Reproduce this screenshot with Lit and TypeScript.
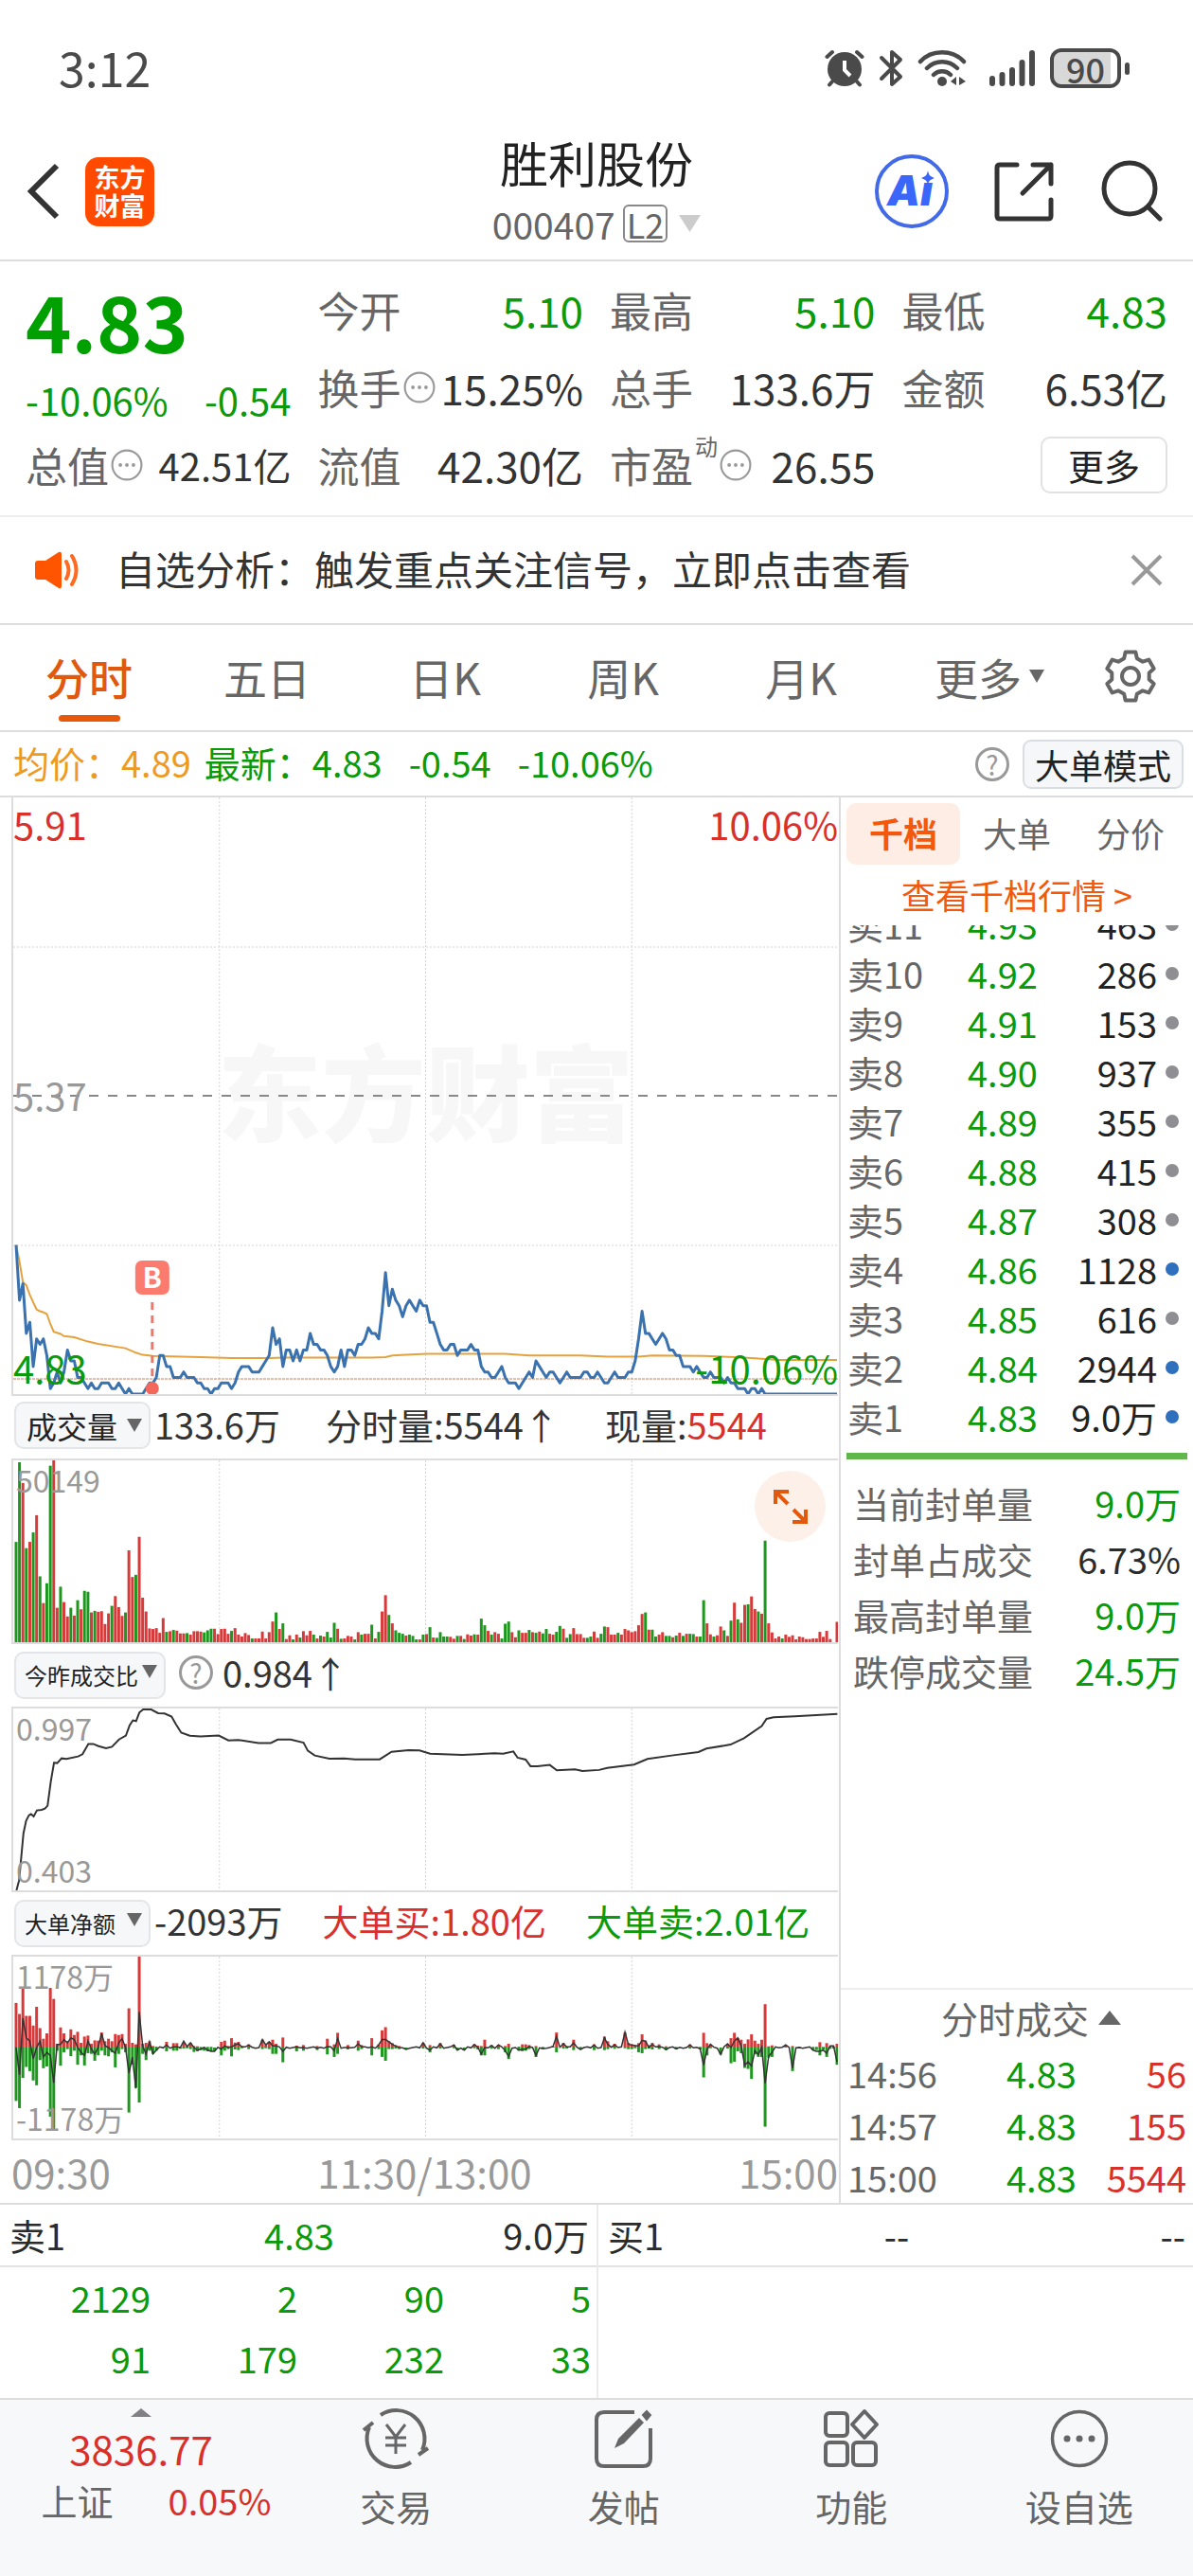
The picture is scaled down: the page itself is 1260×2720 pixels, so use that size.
import { LitElement, html, svg, css } from "lit";
import { customElement, state } from "lit/decorators.js";
import { classMap } from "lit/directives/class-map.js";

type Level = [string, string, string, boolean];

const LEVELS: Level[] = [
  ["卖11", "4.93", "463", false],
  ["卖10", "4.92", "286", false],
  ["卖9", "4.91", "153", false],
  ["卖8", "4.90", "937", false],
  ["卖7", "4.89", "355", false],
  ["卖6", "4.88", "415", false],
  ["卖5", "4.87", "308", false],
  ["卖4", "4.86", "1128", true],
  ["卖3", "4.85", "616", false],
  ["卖2", "4.84", "2944", true],
  ["卖1", "4.83", "9.0万", true],
];

const SEAL: [string, string, string][] = [
  ["当前封单量", "9.0万", "green"],
  ["封单占成交", "6.73%", "dark"],
  ["最高封单量", "9.0万", "green"],
  ["跌停成交量", "24.5万", "green"],
];

const TRADES = [
  ["14:56", "4.83", "56"],
  ["14:57", "4.83", "155"],
  ["15:00", "4.83", "5544"],
];

const QUEUE = [
  ["2129", "2", "90", "5"],
  ["91", "179", "232", "33"],
];

/* Last price per minute, in cents above 4.83. */
const PRICE = (
  "27 17 20 11 13 5 10 9 10 7 1 2 4 2 4 8 6 6 3 3 2 1 2 1 1 2 2 2 1 1 2 1 0 1 0 0 0 0 1 2 2 3 7 7 5 5 3 3 3 4 3 3 3 2 2 1 1 0 1 1 " +
  "2 2 2 1 2 4 5 5 5 4 4 4 5 6 7 12 9 10 5 8 8 6 8 6 8 8 11 9 9 8 8 7 5 4 5 8 5 8 8 7 9 9 10 12 11 11 10 15 22 16 19 17 16 14 16 17 16 15 17 16 " +
  "16 13 13 11 9 8 8 9 9 7 8 8 8 9 8 8 5 4 4 3 3 4 5 3 2 2 2 1 2 3 4 3 6 5 4 3 4 4 3 2 3 4 3 3 3 3 4 4 3 3 4 3 2 2 3 4 3 3 3 4 " +
  "4 6 10 15 11 11 10 9 10 11 10 8 8 7 7 5 5 5 4 5 4 3 3 4 3 3 3 2 3 2 2 1 1 1 0 1 1 0 1 0 0 0 0 0 0 0 0 0 0 0 0 0 0 0 0 0 0 0 0 0 0"
).split(" ").map(Number);

/* Average price: minute, cents above 4.83. */
const AVERAGE: [number, number][] = [
  [0, 27], [1, 24], [2, 20.3], [3, 19.7], [4, 18], [5, 16.6], [6, 15.3], [7, 15], [8, 14.8], [9, 14.5], [10, 12.7],
  [11, 11.3], [13, 10.9], [14, 10.5], [17, 10.3], [21, 9.5], [24, 9.1], [32, 8.3], [35, 7.5], [37, 7.1], [40, 6.9],
  [54, 6.7], [63, 6.5], [74, 6.5], [78, 6.6], [104, 6.6], [108, 6.7], [110, 7], [114, 7.1], [120, 7.3], [143, 7.3],
  [150, 7], [165, 7], [173, 6.8], [182, 6.8], [186, 7], [201, 6.9], [210, 6.7], [215, 6.5], [223, 6.2], [240, 6.2],
];

/* Volume per minute; 580 is the top of the scale, the letter is the colour. */
const VOLUME = (
  "320g 574g 508r 300g 320r 350g 405r 210g 125r 188g 563g 580r 110r 177g 128r 82r 110g 85r 134g 105r 164g 161g 95r 100g 97r 99r 58r 92r 116g 147r " +
  "112r 84r 95g 293r 208r 215g 336r 142r 98r 44r 42r 45r 30r 77r 33g 35r 39g 37r 28r 28r 29g 24r 35r 35r 34r 31g 38g 43g 43r 26r " +
  "42r 43r 27r 36g 45r 24r 18r 29r 23r 12g 12r 12r 34r 12r 32r 66r 95g 42r 60g 10r 22r 9g 24r 15g 35r 22r 36r 24g 12r 21g " +
  "18r 33g 15g 62g 43r 11g 12r 20r 18r 9g 32r 24g 27r 27r 56g 12r 33g 98r 150r 87g 60r 38g 30g 27g 21r 24g 20g 9g 9r 24g " +
  "26r 48g 15r 14g 32g 18g 18g 17r 11r 20g 20r 10g 25r 21r 25g 24r 75g 54g 36r 24g 32r 27r 12g 59g 66g 32r 16r 38g 30r 30r " +
  "39g 32r 30g 34r 28g 42g 27r 24r 33g 52g 43r 14g 26g 45r 26r 26r 14r 14g 18g 34r 14r 27g 50g 48r 24r 24r 30g 24r 42r 38r " +
  "32r 35r 54r 90r 95g 40r 40g 18g 24r 32r 20g 20g 16r 21g 30r 20g 27r 27g 26g 18r 18g 134g 60r 25r 18g 22r 50r 38g 20r 69g " +
  "126r 73g 62r 119r 121g 146r 106r 98g 91r 324g 60r 31r 12r 18r 12g 24r 17r 22r 9r 18r 16r 10r 10r 12r 12r 33r 17r 36r 10r 0r 65r"
).split(" ");

/* Turnover ratio curve on a 1537 × 580 grid with its origin at 22,187. */
const RATIO: [number, number][] = [
  [29, 767], [34, 735], [38, 660], [42, 585], [47, 545], [52, 528], [56, 524], [61, 531], [67, 512], [76, 510], [82, 506],
  [87, 497], [93, 420], [99, 360], [105, 361], [113, 346], [122, 348], [144, 340], [152, 333], [163, 300], [172, 300],
  [182, 307], [196, 314], [207, 309], [220, 286], [233, 273], [240, 240], [246, 225], [252, 227], [258, 200], [265, 190],
  [280, 190], [293, 202], [305, 203], [318, 213], [326, 237], [336, 264], [352, 274], [372, 276], [406, 273], [424, 289],
  [442, 287], [480, 297], [503, 297], [516, 286], [540, 286], [564, 296], [572, 322], [585, 337], [612, 347], [640, 346],
  [660, 349], [706, 349], [728, 325], [760, 320], [780, 321], [800, 331], [860, 335], [920, 330], [936, 331], [955, 324],
  [963, 344], [978, 350], [987, 371], [1000, 371], [1023, 367], [1036, 384], [1070, 381], [1084, 386], [1115, 383],
  [1130, 377], [1180, 366], [1205, 348], [1250, 337], [1300, 326], [1315, 315], [1360, 302], [1385, 282], [1418, 243],
  [1427, 220], [1440, 215], [1480, 212], [1559, 204],
];

/* Large orders: minute:bought/sold/net, 290 is the top of the scale. */
const ORDERS = (
  "0:142/170/0 1:107/193/-85 2:190/97/92 3:101/62/30 4:101/75/20 5:70/105/-35 6:130/120/0 7:62/40/20 8:28/66/-30 9:45/60/-15 " +
  "10:190/220/-25 11:155/265/-110 12:12/10/10 13:64/58/10 14:45/15/25 15:20/5/15 16:58/27/30 17:40/10/25 18:50/55/0 19:15/25/-15 " +
  "20:35/57/-25 21:38/18/20 22:12/20/-5 23:23/42/-20 24:22/25/0 25:48/10/45 26:20/25/5 27:28/28/0 28:20/15/-10 29:43/63/-18 " +
  "30:40/20/15 31:43/5/28 32:12/15/0 33:125/207/-80 34:15/55/-30 35:10/128/-128 36:290/175/112 37:12/20/5 38:15/40/-20 39:20/10/18 " +
  "40:5/20/-20 41:3/10/-8 44:18/12/8 46:14/10/2 47:14/10/2 48:2/4/0 49:15/3/20 50:4/2/3 51:14/5/15 52:5/14/0 53:4/12/-8 54:2/8/-5 55:2/10/0 " +
  "56:2/12/-8 57:2/12/-12 58:0/12/-12 60:18/25/-5 61:22/10/5 62:5/5/0 63:30/28/2 64:16/6/8 65:18/8/12 66:5/2/2 68:10/5/8 72:25/5/25 " +
  "73:8/2/8 74:18/5/18 75:25/20/5 76:12/20/5 78:32/47/-12 82:6/12/2 84:8/10/0 88:5/8/-2 91:28/22/3 93:10/30/-10 94:47/20/28 " +
  "97:8/6/0 100:22/10/12 101:8/5/2 104:30/25/2 106:10/5/8 107:55/30/25 108:65/42/25 109:20/5/18 110:14/5/10 111:8/3/4 112:5/5/0 " +
  "114:0/5/-6 119:15/3/15 121:8/15/-8 124:14/3/12 128:8/2/8 129:0/8/-8 131:0/8/-8 134:10/2/10 135:6/6/0 136:5/25/-20 137:25/25/0 139:8/4/6 " +
  "141:8/5/8 143:5/15/-10 144:12/37/-28 147:3/10/-8 148:10/12/-5 149:10/10/-5 150:8/5/3 152:5/30/-25 154:2/4/-4 157:4/0/4 " +
  "158:48/15/35 160:15/3/12 161:3/3/2 163:25/8/15 165:2/5/-6 169:10/8/8 172:35/8/30 173:20/5/10 175:12/4/8 178:48/2/48 179:15/5/10 " +
  "180:10/5/8 181:8/2/6 182:14/15/5 183:42/18/22 184:22/5/20 185:8/3/0 186:15/6/10 188:10/5/3 190:4/8/-6 193:2/6/-4 197:10/3/8 " +
  "200:2/6/-4 201:47/95/-55 202:14/25/-5 203:10/2/10 206:0/22/-22 208:12/3/12 209:30/50/0 210:47/45/20 211:30/12/30 212:25/18/5 " +
  "213:12/65/-55 214:26/68/-45 215:42/100/-58 216:22/22/-10 217:12/30/-22 218:25/30/0 219:138/252/-112 220:4/32/-28 221:7/30/-15 " +
  "225:6/0/8 227:5/75/-65 229:3/3/0 233:2/8/-8 234:2/8/-12 235:17/25/-12 236:2/6/-8 237:14/30/-18 238:4/4/5 239:3/3/5 240:12/55/-45"
).split(" ").map((entry) => {
  const [minute, values] = entry.split(":");
  const [bought, sold, net] = values.split("/").map(Number);
  return { minute: Number(minute), bought, sold, net };
});

const CHART_WIDTH = 872;
const minuteX = (minute: number) => 3 + (minute * 868) / 240;

const toPoints = (points: [number, number][]) =>
  points.map(([x, y]) => `${x.toFixed(1)},${y.toFixed(1)}`).join(" ");

const gearPath = () => {
  const points: string[] = [];
  for (let tooth = 0; tooth < 6; tooth++) {
    const middle = tooth * 60 - 90;
    for (const [offset, radius] of [[-20, 20], [-12, 26], [12, 26], [20, 20]]) {
      const angle = ((middle + offset) * Math.PI) / 180;
      points.push(`${(30 + radius * Math.cos(angle)).toFixed(1)} ${(30 + radius * Math.sin(angle)).toFixed(1)}`);
    }
  }
  return `M${points.join("L")}Z`;
};

const gridLines = (height: number) => svg`
  ${[1, 2, 3].map((n) => svg`<line class="dots" x1=${(n * CHART_WIDTH) / 4} x2=${(n * CHART_WIDTH) / 4} y1="0" y2=${height} />`)}
`;

const moreInfo = html`<svg class="info" viewBox="0 0 32 32" aria-hidden="true">
  <circle cx="16" cy="16" r="14.5" fill="none" stroke="#999" stroke-width="2" />
  <circle cx="9.5" cy="16" r="1.8" fill="#999" /><circle cx="16" cy="16" r="1.8" fill="#999" /><circle cx="22.5" cy="16" r="1.8" fill="#999" />
</svg>`;

const helpMark = html`<button class="help" aria-label="说明">?</button>`;

@customElement("app-root")
export class AppRoot extends LitElement {
  @state() private period = "分时";
  @state() private depth = "千档";
  @state() private notice = true;

  static styles = css`
    :host {
      display: block;
      background: #fff;
      color: #333;
      font-family: "Noto Sans CJK SC", "Noto Sans", sans-serif;
      font-size: 38px;
      line-height: 48px;
    }
    * { box-sizing: border-box; }
    button, select {
      font: inherit;
      color: inherit;
      background: none;
      border: 0;
      padding: 0;
      margin: 0;
    }
    a { color: inherit; text-decoration: none; }
    svg { display: block; flex: none; }
    h1, p { margin: 0; }
    table { border-collapse: collapse; width: 100%; }
    td, th { padding: 0; font-weight: 400; text-align: left; }
    .green { color: #0a9a0a; }
    .red { color: #d9302c; }
    .orange { color: #ee9a22; }
    .dark { color: #2b2b2b; }

    .status {
      display: flex;
      align-items: center;
      justify-content: space-between;
      height: 130px;
      padding: 10px 76px 0 62px;
      color: #4a4a4a;
      font-size: 50px;
    }
    .status-icons { display: flex; align-items: center; gap: 15px; padding-top: 4px; }
    .signal { margin-left: 8px; }
    .battery {
      position: relative;
      display: grid;
      place-items: center;
      width: 75px;
      height: 42px;
      border: 4px solid #4a4a4a;
      border-radius: 12px;
      background: linear-gradient(90deg, #d8d8d8 90%, #fff 90%);
      font-size: 36px;
      font-weight: 500;
      line-height: 34px;
    }
    .battery::after {
      content: "";
      position: absolute;
      right: -13px;
      top: 11px;
      width: 5px;
      height: 13px;
      border-radius: 3px;
      background: #4a4a4a;
    }

    .head {
      display: grid;
      grid-template-columns: 1fr auto 1fr;
      align-items: center;
      height: 146px;
      border-bottom: 2px solid #ddd;
    }
    .head-left { display: flex; align-items: center; gap: 26px; padding-left: 26px; }
    .head-right { display: flex; align-items: center; justify-content: flex-end; gap: 48px; padding-right: 32px; }
    .logo {
      display: grid;
      place-content: center;
      width: 73px;
      height: 73px;
      border-radius: 14px;
      background: #ff4a00;
      color: #fff;
      font-size: 27px;
      font-weight: 700;
      line-height: 30px;
    }
    .title { display: grid; justify-items: center; row-gap: 12px; padding-bottom: 8px; }
    .title h1 { font-size: 51px; font-weight: 400; line-height: 64px; color: #222; }
    .code { display: flex; align-items: center; gap: 8px; color: #666; font-size: 39px; line-height: 42px; }
    .level { border: 2px solid #888; border-radius: 6px; padding: 0 2px; font-size: 36px; line-height: 36px; }
    .code svg { margin-left: 4px; }

    .quote {
      display: grid;
      grid-template-columns: repeat(4, minmax(0, 1fr));
      column-gap: 28px;
      padding: 11px 27px;
      border-bottom: 2px solid #eee;
      font-size: 44px;
    }
    .cell { display: flex; align-items: center; justify-content: space-between; height: 82px; padding-bottom: 2px; white-space: nowrap; }
    .cell .label { display: flex; align-items: center; color: #666; }
    .cell .small { font-size: 40px; }
    .dynamic { align-self: flex-start; font-size: 24px; line-height: 24px; margin-left: 2px; margin-top: -8px; }
    .price { height: 108px; font-size: 82px; font-weight: 700; line-height: 102px; color: #00a000; }
    .change { display: flex; align-items: center; justify-content: space-between; height: 56px; padding-bottom: 2px; font-size: 40px; }
    .info { width: 34px; height: 34px; margin-left: 2px; }
    .more {
      margin-left: auto;
      width: 134px;
      height: 60px;
      border: 2px solid #e2e2e2;
      border-radius: 10px;
      color: #222;
      font-size: 38px;
      line-height: 50px;
    }

    .notice {
      display: flex;
      align-items: center;
      height: 114px;
      padding: 0 32px 0 36px;
      border-bottom: 2px solid #ddd;
      font-size: 42px;
    }
    .notice p { flex: 1; padding: 0 0 4px 36px; }
    .notice button { display: grid; }

    .periods {
      display: grid;
      grid-template-columns: repeat(5, 188fr) 210fr 88fr;
      padding-right: 22px;
      height: 113px;
      border-bottom: 2px solid #ddd;
      color: #666;
      font-size: 46px;
    }
    .periods button {
      position: relative;
      display: flex;
      align-items: center;
      justify-content: center;
      gap: 8px;
      padding-bottom: 4px;
    }
    .periods .on { color: #e0590f; font-weight: 500; }
    .periods .on::after {
      content: "";
      position: absolute;
      left: calc(50% - 32px);
      bottom: 9px;
      width: 65px;
      height: 7px;
      border-radius: 4px;
      background: #e8580a;
    }

    .summary {
      display: flex;
      align-items: center;
      gap: 14px;
      height: 67px;
      padding: 0 10px 0 14px;
    }
    .summary > span { padding-bottom: 4px; }
    .summary .latest { display: flex; gap: 28px; margin-right: auto; }
    .help {
      width: 36px;
      height: 36px;
      border: 3px solid #999;
      border-radius: 50%;
      color: #999;
      font-size: 28px;
      line-height: 28px;
    }
    .mode {
      width: 170px;
      height: 52px;
      border: 2px solid #dadde2;
      border-radius: 9px;
      background: #f6f7f9;
      color: #222;
      font-size: 36px;
      line-height: 44px;
    }

    .body { display: grid; grid-template-columns: minmax(0, 1fr) 374px; border-top: 2px solid #ddd; }
    .charts { padding: 0 1px 0 12px; }
    .chart { position: relative; border: solid #ddd; border-width: 2px 0 2px 2px; }
    .chart.first { border-top: 0; }
    .chart svg.plot { width: 100%; height: 192px; }
    .chart svg.tall { height: 630px; }
    .plot * { vector-effect: non-scaling-stroke; }
    .dots { stroke: #d4d4d4; stroke-width: 1; stroke-dasharray: 2 2; }
    .tag { position: absolute; left: 3px; color: #999; font-size: 32px; line-height: 40px; }
    .tag.big { left: 0; font-size: 40px; }
    .tag.right { left: auto; right: 0; }
    .tag.top { top: 0; }
    .tag.upper { top: 8px; }
    .tag.mid { top: 294px; }
    .tag.bottom { bottom: 2px; }
    .tag.big.bottom { bottom: 8px; }
    .tag.red { color: #d9302c; }
    .tag.green { color: #0a9a0a; }
    .watermark {
      position: absolute;
      inset: 0;
      display: grid;
      place-items: center;
      padding-bottom: 16px;
      color: #f7f7f7;
      font-size: 110px;
      font-weight: 900;
      line-height: 120px;
    }
    .layer { position: relative; }
    .bar { display: flex; align-items: center; height: 66px; padding: 0 0 6px 3px; white-space: nowrap; }
    .bar .gap { margin-left: 48px; }
    .bar .narrow { margin-left: 42px; }
    .bar .value { margin-left: 4px; }
    .bar .help { margin: 0 6px 0 14px; }
    .picker { position: relative; display: block; }
    .picker select {
      appearance: none;
      width: 144px;
      height: 50px;
      padding: 0 0 0 11px;
      border: 2px solid #e3e5e9;
      border-radius: 10px;
      background: #f6f7f9;
      color: #222;
      font-size: 32px;
      line-height: 44px;
    }
    .picker.long select { width: 160px; }
    .picker.compact select { padding-left: 9px; font-size: 24px; }
    .picker svg { position: absolute; right: 9px; top: 19px; pointer-events: none; }
    .expand {
      position: absolute;
      right: 13px;
      top: 11px;
      display: grid;
      place-items: center;
      width: 75px;
      height: 75px;
      border-radius: 50%;
      background: #fdf0e8;
    }
    .times { display: grid; grid-template-columns: 1fr auto 1fr; height: 66px; align-items: center; color: #999; font-size: 42px; }
    .times span:last-child { text-align: right; }

    .side { display: flex; flex-direction: column; border-left: 2px solid #ddd; }
    .depths { display: grid; grid-template-columns: repeat(3, 1fr); padding: 6px 6px 0; color: #666; font-size: 36px; }
    .depths button { height: 65px; border-radius: 10px; line-height: 56px; padding-bottom: 4px; }
    .depths .on { background: #feede4; color: #f2590d; font-weight: 700; }
    .full { display: block; height: 64px; text-align: center; color: #f2590d; font-size: 36px; line-height: 62px; }
    .ladder { display: flex; flex-direction: column; justify-content: flex-end; height: 545px; overflow: hidden; padding: 0 14px 0 7px; }
    .ladder table { table-layout: fixed; flex: none; }
    .ladder tr { height: 52px; }
    .ladder th { width: 127px; color: #666; }
    .ladder .amount { text-align: right; color: #222; white-space: nowrap; }
    .ladder .mark { width: 24px; }
    .dot { width: 14px; height: 14px; margin-left: 9px; border-radius: 50%; background: #8e8e93; }
    .dot.blue { background: #2e70bd; }
    .depth-bar { height: 7px; margin: 12px 6px 16px; background: #62b74c; }
    .seal { display: flex; justify-content: space-between; align-items: center; height: 59px; padding: 0 13px; color: #666; }
    .trades { margin-top: auto; border-top: 2px solid #eee; padding: 0 7px; }
    .trades-title { display: flex; align-items: center; justify-content: center; gap: 10px; width: 100%; height: 60px; color: #666; font-size: 39px; padding: 0 0 2px 30px; }
    .trades tr { height: 55px; }
    .trades th { width: 168px; color: #666; }
    .trades td:last-child { text-align: right; }

    .best { display: grid; grid-template-columns: 1fr 1fr; border-top: 2px solid #ddd; border-bottom: 2px solid #ddd; }
    .half + .half { border-left: 2px solid #eaeaea; }
    .best-row { display: grid; grid-template-columns: 1fr 1fr 1fr; height: 66px; align-items: center; padding: 0 8px 0 10px; border-bottom: 2px solid #e2e2e2; color: #2b2b2b; }
    .best-row :nth-child(2) { text-align: center; }
    .best-row :nth-child(3) { text-align: right; }
    .queue { padding: 0 6px 10px 4px; }
    .queue table { table-layout: fixed; }
    .queue tr { height: 64px; }
    .queue td { text-align: right; }

    .nav { display: grid; grid-template-columns: 298px repeat(4, 1fr); height: 186px; background: #f7f8fa; color: #666; }
    .nav a, .nav button { display: grid; justify-items: center; align-content: start; }
    .nav button { padding-top: 8px; row-gap: 14px; }
    .index { padding-top: 9px; }
    .index .points { font-size: 42px; line-height: 50px; margin-top: 8px; }
    .index .line { display: flex; gap: 58px; line-height: 52px; margin-top: 4px; padding-left: 32px; }
  `;

  private picker(label: string, cls: string) {
    return html`<label class="picker ${cls}">
      <select aria-label="指标"><option>${label}</option></select>
      <svg width="16" height="14" viewBox="0 0 16 14"><path d="M0 0H16L8 14Z" fill="#666" /></svg>
    </label>`;
  }

  private priceChart() {
    const y = (cents: number) => 630 - cents * 5.83;
    return html`<div class="chart first">
      <div class="watermark" aria-hidden="true">东方财富</div>
      <div class="layer">
        <svg class="plot tall" viewBox="0 0 872 630" preserveAspectRatio="none" role="img" aria-label="分时走势">
          ${gridLines(630)}
          <line class="dots" x1="0" x2="872" y1="158" y2="158" />
          <line class="dots" x1="0" x2="872" y1="473" y2="473" />
          <line x1="0" x2="872" y1="315" y2="315" stroke="#888" stroke-width="2" stroke-dasharray="10 10" />
          <line x1="0" x2="872" y1="614" y2="614" stroke="#c08060" stroke-width="1" stroke-dasharray="3 1" />
          <polyline fill="none" stroke="#e5a23c" stroke-width="2" points=${toPoints(AVERAGE.map(([m, c]) => [minuteX(m), y(c)]))} />
          <polyline fill="none" stroke="#3a72b0" stroke-width="3" stroke-linejoin="round" points=${toPoints(PRICE.map((c, m) => [minuteX(m), y(c)]))} />
          <rect x="129" y="489" width="36" height="36" rx="7" fill="#fb7c6e" />
          <line x1="147" x2="147" y1="533" y2="620" stroke="#f0766a" stroke-width="3" stroke-dasharray="8 6" />
          <circle cx="147" cy="624" r="7" fill="#f4685c" />
          <text x="147" y="518" text-anchor="middle" font-size="30" font-weight="700" fill="#fff">B</text>
        </svg>
      </div>
      <span class="tag big top red upper">5.91</span>
      <span class="tag big top right red upper">10.06%</span>
      <span class="tag big mid">5.37</span>
      <span class="tag big bottom green">4.83</span>
      <span class="tag big bottom right green">-10.06%</span>
    </div>`;
  }

  private volumeChart() {
    return html`<div class="chart">
      <svg class="plot" viewBox="0 0 872 190" preserveAspectRatio="none" role="img" aria-label="成交量">
        ${gridLines(190)}
        ${VOLUME.map((bar, minute) => {
          const height = (parseInt(bar, 10) * 190) / 580;
          return svg`<rect x=${(minuteX(minute) - 1.5).toFixed(1)} y=${(190 - height).toFixed(1)} width="3" height=${height.toFixed(1)} fill=${bar.endsWith("g") ? "#1f961f" : "#d63a3a"} />`;
        })}
      </svg>
      <span class="tag top">50149</span>
      <button class="expand" aria-label="全屏">
        <svg width="40" height="40" viewBox="0 0 40 40" fill="none" stroke="#e0590f" stroke-width="4">
          <path d="M4 17V4H18M4 4L17 17M36 23V36H22M36 36L23 23" />
        </svg>
      </button>
    </div>`;
  }

  private ratioChart() {
    const points = RATIO.map(([x, y]): [number, number] => [((x - 23) * 872) / 1537, ((y - 187) * 190) / 580]);
    return html`<div class="chart">
      <svg class="plot" viewBox="0 0 872 190" preserveAspectRatio="none" role="img" aria-label="今昨成交比">
        ${gridLines(190)}
        <polyline fill="none" stroke="#333" stroke-width="2" points=${toPoints(points)} />
      </svg>
      <span class="tag top">0.997</span>
      <span class="tag bottom">0.403</span>
    </div>`;
  }

  private ordersChart() {
    const nets = new Map(ORDERS.map((o) => [o.minute, o.net]));
    const line = Array.from({ length: 241 }, (_, m): [number, number] => [minuteX(m), 95 - (nets.get(m) ?? ((m * 7) % 5) - 2) / 3]);
    return html`<div class="chart">
      <svg class="plot" viewBox="0 0 872 190" preserveAspectRatio="none" role="img" aria-label="大单净额">
        ${gridLines(190)}
        ${ORDERS.map((o) => {
          const x = (minuteX(o.minute) - 1.5).toFixed(1);
          return svg`
            <rect x=${x} y=${(95 - o.bought * 0.328).toFixed(1)} width="3" height=${(o.bought * 0.328).toFixed(1)} fill="#d63a3a" />
            <rect x=${x} y="95" width="3" height=${(o.sold * 0.328).toFixed(1)} fill="#1f961f" />`;
        })}
        <polyline fill="none" stroke="#333" stroke-width="1.5" points=${toPoints(line)} />
      </svg>
      <span class="tag top">1178万</span>
      <span class="tag bottom">-1178万</span>
    </div>`;
  }

  private cell(label: string, value: string, color = "", extra: unknown = "") {
    return html`<div class="cell"><span class="label">${label}${extra}</span><span class=${color}>${value}</span></div>`;
  }

  render() {
    return html`
      <div class="status">
        <span>3:12</span>
        <div class="status-icons">
          <svg width="42" height="40" viewBox="0 0 42 40" fill="none" stroke="#4a4a4a" stroke-width="4" stroke-linecap="round">
            <circle cx="21" cy="21" r="18" fill="#4a4a4a" stroke="none" />
            <path d="M2.5 8L8 3M39.5 8L34 3M9 33L5 37.5M33 33L37 37.5" />
            <path d="M21 12V22L27 28" stroke="#fff" stroke-linecap="butt" />
          </svg>
          <svg width="26" height="40" viewBox="0 0 26 40" fill="none" stroke="#4a4a4a" stroke-width="4" stroke-linejoin="round" stroke-linecap="round">
            <path d="M3 9L23 29L14 37V3L23 11L3 31" />
          </svg>
          <svg width="52" height="40" viewBox="0 0 52 40" fill="none" stroke="#4a4a4a" stroke-width="4.5" stroke-linecap="round">
            <path d="M3 13C15 0 37 0 49 13M10 20C19 11 33 11 42 20M17 27C22 22 30 22 35 27" />
            <circle cx="26" cy="34" r="5" fill="#4a4a4a" stroke="none" />
            <path d="M41 29V38L35 34ZM44 38V29L51 34Z" fill="#4a4a4a" stroke="none" />
          </svg>
          <svg class="signal" width="50" height="40" viewBox="0 0 50 40" stroke="#4a4a4a" stroke-width="6" stroke-linecap="round">
            <path d="M4 31V36M14.5 27V36M25 22V36M35.5 14V36M46 4V36" />
          </svg>
          <span class="battery">90</span>
        </div>
      </div>

      <header class="head">
        <div class="head-left">
          <button aria-label="返回">
            <svg width="38" height="60" viewBox="0 0 38 60" fill="none" stroke="#333" stroke-width="6"><path d="M34 3L7 30L34 57" /></svg>
          </button>
          <a class="logo" href="#" aria-label="首页"><span>东方</span><span>财富</span></a>
        </div>
        <div class="title">
          <h1>胜利股份</h1>
          <div class="code">
            <span>000407</span><span class="level">L2</span>
            <svg width="23" height="18" viewBox="0 0 23 18"><path d="M0 0H23L11.5 18Z" fill="#ccc" /></svg>
          </div>
        </div>
        <div class="head-right">
          <button aria-label="智能助手">
            <svg width="78" height="78" viewBox="0 0 78 78">
              <circle cx="39" cy="39" r="37" fill="none" stroke="#4169e8" stroke-width="4" />
              <text x="37" y="54" text-anchor="middle" font-family="Inter, sans-serif" font-size="44" font-weight="900" font-style="italic" fill="#3a66fa">Aı</text>
              <path d="M56 17C57 22 58 23 63 25C58 27 57 28 56 32C55 28 54 27 49 25C54 23 55 22 56 17Z" fill="#3a66fa" />
            </svg>
          </button>
          <button aria-label="分享">
            <svg width="64" height="64" viewBox="0 0 64 64" fill="none" stroke="#333" stroke-width="5" stroke-linecap="round" stroke-linejoin="round">
              <path d="M24 4H6Q3 4 3 7V58Q3 61 6 61H57Q60 61 60 58V41M41 4H60V24M60 4L30 34" />
            </svg>
          </button>
          <button aria-label="搜索">
            <svg width="66" height="66" viewBox="0 0 66 66" fill="none" stroke="#333" stroke-width="5" stroke-linecap="round">
              <circle cx="31" cy="30" r="27" /><path d="M51 50L63 62" />
            </svg>
          </button>
        </div>
      </header>

      <section class="quote">
        <div>
          <div class="price">4.83</div>
          <div class="change green"><span>-10.06%</span><span>-0.54</span></div>
          <div class="cell"><span class="label">总值${moreInfo}</span><span class="small">42.51亿</span></div>
        </div>
        <div>
          ${this.cell("今开", "5.10", "green")}
          ${this.cell("换手", "15.25%", "", moreInfo)}
          ${this.cell("流值", "42.30亿")}
        </div>
        <div>
          ${this.cell("最高", "5.10", "green")}
          ${this.cell("总手", "133.6万")}
          ${this.cell("市盈", "26.55", "", html`<span class="dynamic">动</span>${moreInfo}`)}
        </div>
        <div>
          ${this.cell("最低", "4.83", "green")}
          ${this.cell("金额", "6.53亿")}
          <div class="cell"><button class="more">更多</button></div>
        </div>
      </section>

      ${this.notice
        ? html`<section class="notice">
            <svg width="50" height="42" viewBox="0 0 50 42">
              <path d="M4 11H12L26 2Q29 1 29 4V38Q29 41 26 40L12 31H4Q1 31 1 28V14Q1 11 4 11Z" fill="#ff5500" />
              <path d="M34 12Q39 21 34 30M40 6Q49 21 40 36" fill="none" stroke="#ff6a20" stroke-width="4" stroke-linecap="round" />
            </svg>
            <p>自选分析：触发重点关注信号，立即点击查看</p>
            <button aria-label="关闭" @click=${() => (this.notice = false)}>
              <svg width="34" height="34" viewBox="0 0 34 34" stroke="#999" stroke-width="4"><path d="M2 2L32 32M32 2L2 32" /></svg>
            </button>
          </section>`
        : ""}

      <nav class="periods">
        ${["分时", "五日", "日K", "周K", "月K", "更多"].map(
          (name) => html`<button class=${classMap({ on: this.period === name })} @click=${() => (this.period = name)}>
            ${name}${name === "更多" ? html`<svg width="16" height="14" viewBox="0 0 16 14"><path d="M0 0H16L8 14Z" fill="#666" /></svg>` : ""}
          </button>`
        )}
        <button aria-label="设置">
          <svg width="60" height="60" viewBox="0 0 60 60" fill="none" stroke="#666" stroke-width="4" stroke-linejoin="round">
            <path d=${gearPath()} /><circle cx="30" cy="30" r="9" />
          </svg>
        </button>
      </nav>

      <div class="summary">
        <span class="orange">均价：4.89</span>
        <span class="latest green"><span>最新：4.83</span><span>-0.54</span><span>-10.06%</span></span>
        ${helpMark}
        <button class="mode">大单模式</button>
      </div>

      <main class="body">
        <section class="charts">
          ${this.priceChart()}
          <div class="bar">
            ${this.picker("成交量", "")}
            <span class="value">133.6万</span>
            <span class="gap">分时量:5544↑</span>
            <span class="gap">现量:<span class="red">5544</span></span>
          </div>
          ${this.volumeChart()}
          <div class="bar">
            ${this.picker("今昨成交比", "long compact")}
            ${helpMark}
            <span class="value">0.984↑</span>
          </div>
          ${this.ratioChart()}
          <div class="bar">
            ${this.picker("大单净额", "compact")}
            <span class="value">-2093万</span>
            <span class="narrow red">大单买:1.80亿</span>
            <span class="narrow green">大单卖:2.01亿</span>
          </div>
          ${this.ordersChart()}
          <div class="times"><span>09:30</span><span>11:30/13:00</span><span>15:00</span></div>
        </section>

        <aside class="side">
          <div class="depths">
            ${["千档", "大单", "分价"].map(
              (name) => html`<button class=${classMap({ on: this.depth === name })} @click=${() => (this.depth = name)}>${name}</button>`
            )}
          </div>
          <a class="full" href="#">查看千档行情 &gt;</a>
          <div class="ladder">
            <table>
              <tbody>
                ${LEVELS.map(
                  ([name, price, amount, large]) => html`<tr>
                    <th scope="row">${name}</th>
                    <td class="green">${price}</td>
                    <td class="amount">${amount}</td>
                    <td class="mark"><div class=${classMap({ dot: true, blue: large })}></div></td>
                  </tr>`
                )}
              </tbody>
            </table>
          </div>
          <div class="depth-bar"></div>
          ${SEAL.map(([name, value, color]) => html`<div class="seal"><span>${name}</span><span class=${color}>${value}</span></div>`)}
          <div class="trades">
            <button class="trades-title">
              分时成交<svg width="24" height="16" viewBox="0 0 24 16"><path d="M0 16L12 1L24 16Z" fill="#666" /></svg>
            </button>
            <table>
              <tbody>
                ${TRADES.map(
                  ([time, price, amount]) => html`<tr>
                    <th scope="row">${time}</th><td class="green">${price}</td><td class="red">${amount}</td>
                  </tr>`
                )}
              </tbody>
            </table>
          </div>
        </aside>
      </main>

      <section class="best">
        <div class="half">
          <div class="best-row"><span>卖1</span><span class="green">4.83</span><span>9.0万</span></div>
          <div class="queue">
            <table>
              <tbody>
                ${QUEUE.map((row) => html`<tr>${row.map((lot) => html`<td class="green">${lot}</td>`)}</tr>`)}
              </tbody>
            </table>
          </div>
        </div>
        <div class="half">
          <div class="best-row"><span>买1</span><span>--</span><span>--</span></div>
        </div>
      </section>

      <nav class="nav">
        <a class="index" href="#">
          <svg width="22" height="9" viewBox="0 0 22 9"><path d="M0 9L11 0L22 9Z" fill="#808085" /></svg>
          <span class="points red">3836.77</span>
          <span class="line"><span>上证</span><span class="red">0.05%</span></span>
        </a>
        <button>
          <svg width="72" height="66" viewBox="0 0 72 66" fill="none" stroke="#666" stroke-width="4">
            <path d="M20 8A30 30 0 0 1 64 45M60 50L70 43M52 58A30 30 0 0 1 8 21M2 24L12 16" />
            <path d="M26 18L36 31L46 18M36 31V49M25 32H47M25 40H47" stroke-width="3" />
          </svg>
          <span>交易</span>
        </button>
        <button>
          <svg width="66" height="66" viewBox="0 0 66 66" fill="none" stroke="#666" stroke-width="4">
            <path d="M44 5H12Q4 5 4 13V54Q4 62 12 62H53Q61 62 61 54V22" />
            <path d="M23 43L27 33L49 11L54 16L33 38Z" fill="#666" stroke="none" />
            <path d="M53 8L57 4L61 8L57 13Z" fill="#666" stroke="#666" stroke-width="2" />
          </svg>
          <span>发帖</span>
        </button>
        <button>
          <svg width="66" height="66" viewBox="0 0 66 66" fill="none" stroke="#666" stroke-width="4" stroke-linejoin="round">
            <rect x="6" y="6" width="23" height="24" rx="4" /><rect x="6" y="37" width="23" height="24" rx="4" /><rect x="35" y="37" width="24" height="24" rx="4" />
            <path d="M47 4L60 18L47 32L34 18Z" />
          </svg>
          <span>功能</span>
        </button>
        <button>
          <svg width="66" height="66" viewBox="0 0 66 66" fill="#666">
            <circle cx="33" cy="33" r="28.5" fill="none" stroke="#666" stroke-width="3.5" />
            <circle cx="20" cy="33" r="3.5" /><circle cx="33" cy="33" r="3.5" /><circle cx="46" cy="33" r="3.5" />
          </svg>
          <span>设自选</span>
        </button>
      </nav>
    `;
  }
}
